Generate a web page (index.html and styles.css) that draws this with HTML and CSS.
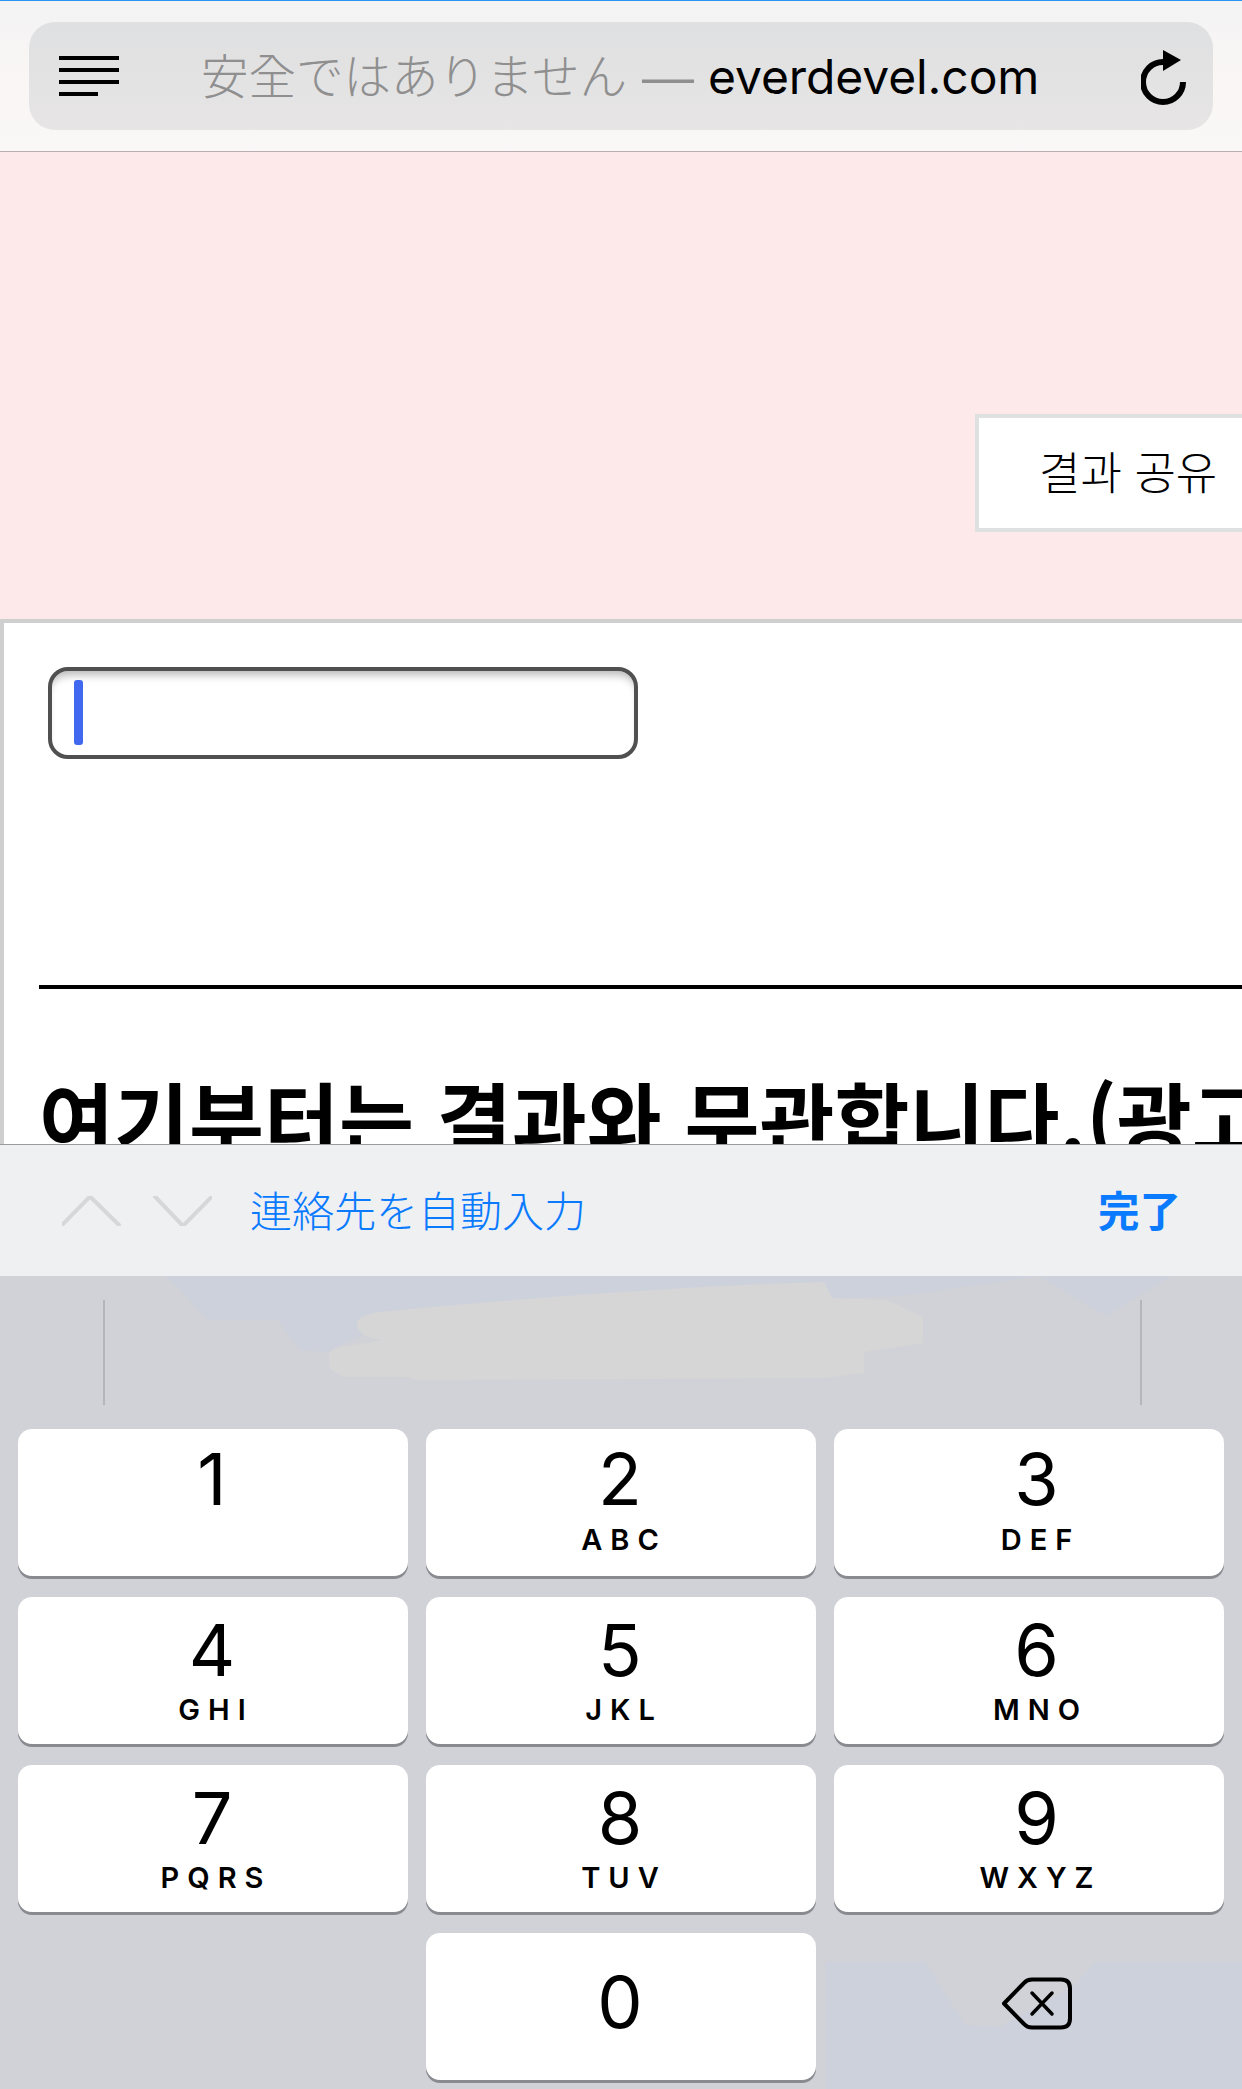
FILE: index.html
```html
<!DOCTYPE html>
<html lang="ko">
<head>
<meta charset="utf-8">
<title>everdevel.com</title>
<link rel="stylesheet" href="styles.css">
</head>
<body>
<div class="app">
  <header class="topbar">
    <div class="pill">
      <svg class="reader" width="60" height="40" viewBox="0 0 60 40"><path d="M0 2h60M0 14h60M0 26h60M0 38h39" stroke="#000" stroke-width="4" fill="none"/></svg>
      <div class="address"><span class="insecure">安全ではありません</span><span class="dash">—</span><span class="domain">everdevel.com</span></div>
      <svg class="reload" width="48" height="56" viewBox="0 0 48 56"><path d="M22 12A20 20 0 1 0 42 32" fill="none" stroke="#000" stroke-width="6"/><path d="M22 0L40 10L22 21Z" fill="#000"/></svg>
    </div>
  </header>

  <main class="page">
    <section class="banner"><div class="share">결과 공유</div></section>
    <section class="content">
      <div class="field"><span class="caret"></span></div>
      <hr class="rule">
      <h2 class="notice">여기부터는 결과와 무관합니다.(광고</h2>
    </section>
  </main>

  <div class="toolbar">
    <svg class="chev" width="150" height="30" viewBox="0 0 150 30"><path d="M0 29L28 0.5L57 29M93 0.5L121 30L150 0.5" fill="none" stroke="#d6d7d7" stroke-width="4" stroke-linecap="round" stroke-linejoin="round"/></svg>
    <div class="autofill">連絡先を自動入力</div>
    <div class="done">完了</div>
  </div>

  <div class="keyboard">
    <svg class="tint" width="1242" height="813" viewBox="0 0 1242 813"><path d="M163 0C180 10 190 25 207 44H277L300 74L327 76L400 40L900 20L1040 0ZM1038 0H1172L1106 40ZM826 686H925L965 749L1000 751L1075 709L1095 686H1242V813H826Z" fill="#cdd1db"/></svg>
    <svg class="scribble" width="600" height="104" viewBox="329 1280 600 104"><path d="M357 1325C357 1318 365 1314 380 1312C500 1300 700 1285 824 1282L832 1298L887 1300L923 1317V1343L864 1352V1373L824 1378L417 1380L407 1377L345 1377C332 1372 327 1366 327 1360C327 1352 332 1349 340 1347L383 1340C365 1338 357 1332 357 1325Z" fill="#d6d6d6"/></svg>
    <div class="suggest"><span class="divider"></span><span class="divider"></span></div>
    <div class="keys">
      <div class="key first"><span class="num">1</span><span class="abc">&nbsp;</span></div>
      <div class="key first"><span class="num">2</span><span class="abc">ABC</span></div>
      <div class="key first right"><span class="num">3</span><span class="abc">DEF</span></div>
      <div class="key"><span class="num">4</span><span class="abc">GHI</span></div>
      <div class="key"><span class="num">5</span><span class="abc">JKL</span></div>
      <div class="key right"><span class="num">6</span><span class="abc">MNO</span></div>
      <div class="key"><span class="num">7</span><span class="abc">PQRS</span></div>
      <div class="key"><span class="num">8</span><span class="abc">TUV</span></div>
      <div class="key right"><span class="num">9</span><span class="abc">WXYZ</span></div>
      <div class="blank"></div>
      <div class="key zero"><span class="num">0</span></div>
      <div class="blank del">
        <svg width="72" height="53" viewBox="0 0 72 53"><path d="M3 26.500L23 6Q26 2.500 31 2.500H60Q69 2.500 69 11.500V41.500Q69 50.500 60 50.500H31Q26 50.500 23 47Z" fill="none" stroke="#000" stroke-width="4" stroke-linejoin="round"/><path d="M31 16L51 37M51 16L31 37" fill="none" stroke="#000" stroke-width="3.500" stroke-linecap="round"/></svg>
      </div>
    </div>
  </div>
</div>
</body>
</html>
```

FILE: styles.css
```css
* { box-sizing: border-box; }
html, body { margin: 0; padding: 0; }
body { background: #fff; font-family: "Inter", "Noto Sans CJK JP", sans-serif; }
.app { width: 1242px; height: 2089px; display: flex; flex-direction: column; overflow: hidden; }

.topbar { height: 152px; flex: none; padding: 21px 29px 0; border-top: 1px solid #2a92f2; border-bottom: 1px solid #bcadb1; background: linear-gradient(180deg, #f3f3f3, #fbf6f6 60%, #f9f7f7); }
.pill { height: 108px; border-radius: 26px; background: linear-gradient(180deg, #dfe0e1, #e7e5e6); display: flex; align-items: center; position: relative; }
.reader { margin-left: 30px; flex: none; }
.address { margin-left: 82px; margin-top: -2px; font-size: 47.500px; line-height: 60px; white-space: nowrap; display: flex; align-items: baseline; }
.insecure { font-family: "Noto Sans CJK JP", sans-serif; font-weight: 300; color: #8f8f8f; }
.dash { font-family: "Liberation Sans", sans-serif; font-size: 52px; color: #8f8f8f; margin-left: 15px; margin-right: 14px; }
.domain { font-family: "Inter", sans-serif; font-size: 48px; letter-spacing: -0.100px; color: #000; }
.reload { position: absolute; right: 24px; top: 28px; }

.page { height: 992px; flex: none; background: #fde8ea; overflow: hidden; }
.banner { height: 467px; padding-top: 262px; padding-left: 975px; }
.share { width: 300px; height: 118px; border: 4px solid #dfe0e0; background: #fff; font-family: "Noto Sans CJK KR", sans-serif; font-weight: 300; font-size: 45px; line-height: 105px; padding-left: 60px; color: #000; }
.content { height: 525px; background: #fff; border-top: 4px solid #cfcfcf; border-left: 4px solid #cfcfcf; padding: 44px 0 0 44px; }
.field { width: 590px; height: 92px; border: 4px solid #505050; border-radius: 20px; padding: 9px 22px; box-shadow: inset 0 9px 8px -5px #b8b8b8; }
.caret { display: block; width: 9px; height: 65px; border-radius: 3px; background: #4169f0; }
.rule { margin: 226px 0 0 -9px; border: 0; height: 4px; background: #000; }
.notice { margin: 77px 0 0 -9px; font-family: "Noto Sans CJK KR", sans-serif; font-weight: 700; font-size: 81.500px; line-height: 100px; color: #000; white-space: nowrap; }

.toolbar { height: 132px; flex: none; border-top: 1px solid #9b9b9b; background: #eff0f2; display: flex; align-items: center; padding: 0 61px 4px 62px; }
.chev { flex: none; margin-top: 4px; }
.autofill { margin-left: 38px; margin-top: -1px; font-family: "Noto Sans CJK JP", sans-serif; font-weight: 300; font-size: 42px; color: #0a7aff; white-space: nowrap; }
.done { margin-left: auto; font-family: "Noto Sans CJK JP", sans-serif; font-weight: 700; font-size: 41.500px; color: #0a7aff; }

.keyboard { flex: 1; background: #d1d2d7; position: relative; overflow: hidden; }
.tint { position: absolute; left: 0; top: 0; }
.scribble { position: absolute; left: 329px; top: 4px; }
.suggest { position: relative; height: 153px; padding: 24px 100px 0 103px; display: flex; justify-content: space-between; }
.divider { width: 2px; height: 105px; background: #b5b6bb; }
.keys { position: relative; display: grid; grid-template-columns: repeat(3, 390px); grid-auto-rows: 147px; gap: 21px 18px; padding-left: 18px; }
.key { background: #fff; border-radius: 14px; box-shadow: 0 3px 0 #898a8f; display: flex; flex-direction: column; align-items: center; padding-top: 11px; padding-right: 2px; color: #000; }
.key.first { padding-top: 8px; }
.key.first .abc { margin-top: 1px; }
.key.zero { padding-top: 27px; }
.key.right { padding-left: 15px; padding-right: 0; }
.num { font-family: "Inter", sans-serif; font-size: 72px; line-height: 84px; }
.abc { font-family: "Inter", sans-serif; font-weight: 600; font-size: 29px; letter-spacing: 8px; line-height: 36px; margin-right: -8px; }
.del { display: flex; justify-content: center; align-items: center; padding-left: 15px; padding-bottom: 7px; }
```
